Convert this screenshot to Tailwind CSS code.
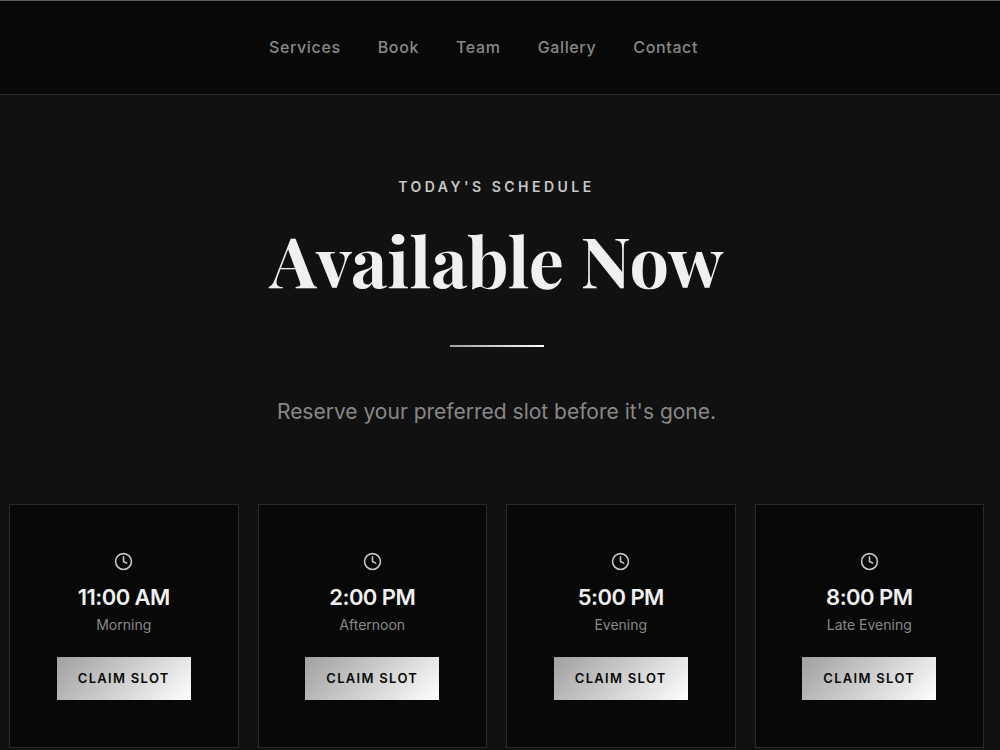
<!DOCTYPE html>
<html lang="en">
  <head>
    <meta charset="UTF-8" />
    <meta name="viewport" content="width=device-width, initial-scale=1.0" />
    <title>Book a slot</title>
    <script src="https://cdn.jsdelivr.net/npm/@tailwindcss/browser@4"></script>
  </head>
  <body class="min-h-screen bg-[#111111] font-['Inter',sans-serif]">
    <header class="bg-[#080808] border-t border-t-[#5c5c5c] border-b border-b-[#2a2a2a]">
      <nav class="flex justify-center gap-[37px] pr-[33px] pt-[34px] pb-[35px] text-base leading-6 font-medium tracking-[0.04em] text-[#888888]">
        <a href="#services">Services</a>
        <a href="#book">Book</a>
        <a href="#team">Team</a>
        <a href="#gallery">Gallery</a>
        <a href="#contact">Contact</a>
      </nav>
    </header>

    <main id="book" class="pl-[9px] pr-4 pt-20 text-center">
      <p class="text-sm leading-6 font-semibold tracking-[0.25em] text-[#c8c8c8]">TODAY'S SCHEDULE</p>
      <h1 class="mt-[18px] text-[70px] leading-[84px] font-bold text-[#f0f0f0] font-['Playfair_Display','Liberation_Serif',serif]">Available Now</h1>
      <div class="mx-auto mt-11 h-[2px] w-[94px] bg-linear-to-r from-[#a0a0a0] to-white"></div>
      <p class="mt-[47px] text-[21px] leading-9 text-[#888888]">Reserve your preferred slot before it's gone.</p>

      <div id="slots" class="mt-[74px] grid grid-cols-4 gap-[19px]"></div>
    </main>

    <template id="slotCard">
      <div class="flex flex-col items-center border border-[#2a2a2a] bg-[#080808] py-[47px]">
        <svg class="size-[19px]" viewBox="0 0 24 24" fill="none" stroke="#c8c8c8" stroke-width="2" stroke-linecap="round" stroke-linejoin="round">
          <circle cx="12" cy="12" r="10" />
          <path d="M12 6v6l4 2" />
        </svg>
        <h2 class="mt-2 text-[22px] leading-9 font-semibold tracking-tight text-[#f0f0f0]"></h2>
        <p class="text-sm leading-5 text-[#888888]"></p>
        <button
          type="button"
          class="mt-[22px] h-[43px] cursor-pointer bg-linear-135 from-[#a0a0a0] to-white px-[21px] text-[13px] font-semibold tracking-widest text-[#080808]"
        >CLAIM SLOT</button>
      </div>
    </template>
  </body>
  <script>
    const slots = [
      { time: "11:00 AM", label: "Morning" },
      { time: "2:00 PM", label: "Afternoon" },
      { time: "5:00 PM", label: "Evening" },
      { time: "8:00 PM", label: "Late Evening" },
    ];
    const slotList = document.getElementById("slots");
    const slotCard = document.getElementById("slotCard");

    slots.forEach((slot) => {
      const card = slotCard.content.cloneNode(true);
      card.querySelector("h2").textContent = slot.time;
      card.querySelector("p").textContent = slot.label;
      slotList.appendChild(card);
    });
  </script>
</html>
